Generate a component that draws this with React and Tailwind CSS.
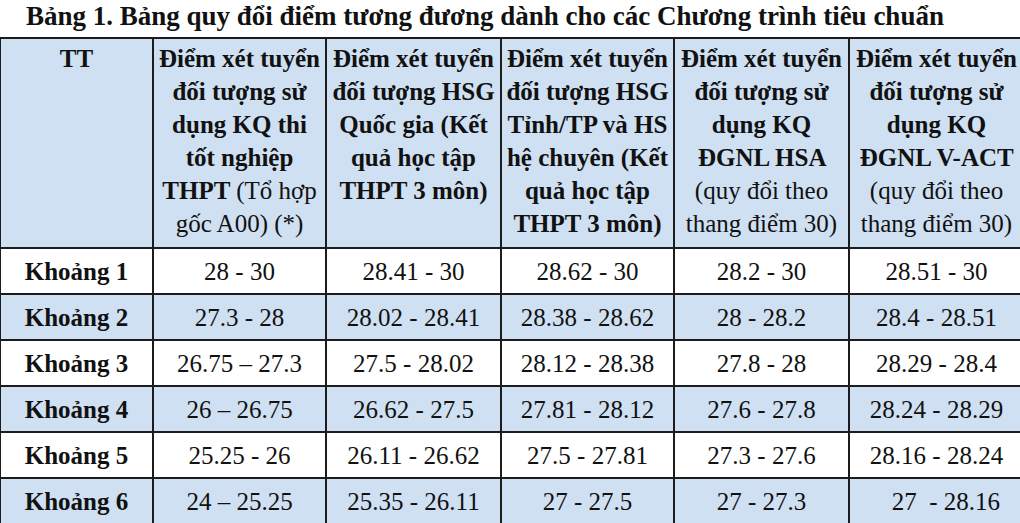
import React from "react";

const ROWS = [
  ["Khoảng 1", "28 - 30", "28.41 - 30", "28.62 - 30", "28.2 - 30", "28.51 - 30"],
  ["Khoảng 2", "27.3 - 28", "28.02 - 28.41", "28.38 - 28.62", "28 - 28.2", "28.4 - 28.51"],
  ["Khoảng 3", "26.75 – 27.3", "27.5 - 28.02", "28.12 - 28.38", "27.8 - 28", "28.29 - 28.4"],
  ["Khoảng 4", "26 – 26.75", "26.62 - 27.5", "27.81 - 28.12", "27.6 - 27.8", "28.24 - 28.29"],
  ["Khoảng 5", "25.25 - 26", "26.11 - 26.62", "27.5 - 27.81", "27.3 - 27.6", "28.16 - 28.24"],
  ["Khoảng 6", "24 – 25.25", "25.35 - 26.11", "27 - 27.5", "27 - 27.3", "   27  - 28.16"],
];

const th = "border-2 border-[#1c1c1c] align-top px-1 pt-[3px] text-center";

export default function App() {
  return (
    <div className="w-[1020px] h-[523px] overflow-hidden bg-white text-[#111] font-['Liberation_Serif',serif]">
      {/* Title */}
      <h1 className="h-[37px] pl-[26px] pt-[1px] text-[27px] leading-[31px] font-bold whitespace-nowrap">
        Bảng 1. Bảng quy đổi điểm tương đương dành cho các Chương trình tiêu chuẩn
      </h1>

      {/* Table */}
      <table className="w-[1024px] -ml-px border-collapse table-fixed text-[25px] leading-[33px]">
        <colgroup>
          <col className="w-[153px]" />
          <col className="w-[173px]" />
          <col className="w-[175px]" />
          <col className="w-[173px]" />
          <col className="w-[175px]" />
          <col className="w-[175px]" />
        </colgroup>
        <thead>
          <tr className="h-[210px] bg-[#cfe0f2]">
            <th className={th}>TT</th>
            <th className={th}>
              Điểm xét tuyển đối tượng sử dụng KQ thi tốt nghiệp THPT{" "}
              <span className="font-normal">(Tổ hợp gốc A00) (*)</span>
            </th>
            <th className={th}>Điểm xét tuyển đối tượng HSG Quốc gia (Kết quả học tập THPT 3 môn)</th>
            <th className={th}>Điểm xét tuyển đối tượng HSG Tỉnh/TP và HS hệ chuyên (Kết quả học tập THPT 3 môn)</th>
            <th className={th}>
              Điểm xét tuyển đối tượng sử dụng KQ ĐGNL HSA{" "}
              <span className="font-normal">(quy đổi theo thang điểm 30)</span>
            </th>
            <th className={th}>
              Điểm xét tuyển đối tượng sử dụng KQ ĐGNL V-ACT{" "}
              <span className="font-normal">(quy đổi theo thang điểm 30)</span>
            </th>
          </tr>
        </thead>
        <tbody>
          {ROWS.map((row, i) => (
            <tr key={row[0]} className={`h-[46px] ${i % 2 === 1 ? "bg-[#cfe0f2]" : "bg-white"}`}>
              {row.map((cell, j) => (
                <td
                  key={j}
                  className={`border-2 border-[#1c1c1c] text-center whitespace-pre ${j === 0 ? "font-bold" : ""}`}
                >
                  {cell}
                </td>
              ))}
            </tr>
          ))}
        </tbody>
      </table>
    </div>
  );
}
